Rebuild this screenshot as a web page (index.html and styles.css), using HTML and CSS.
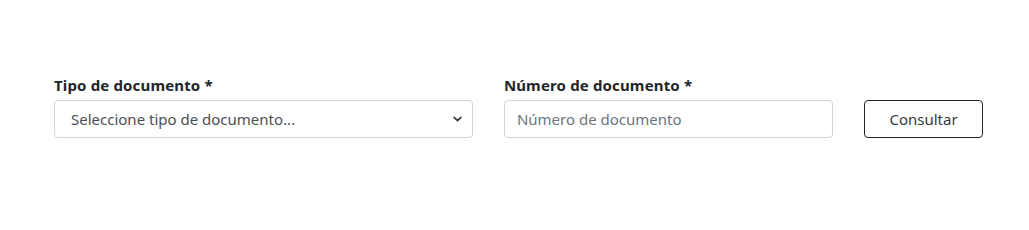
FILE: index.html
```html
<!DOCTYPE html>
<html lang="es">
<head>
  <meta charset="UTF-8">
  <meta name="viewport" content="width=device-width, initial-scale=1.0">
  <title>Consulta de documento</title>
  <link rel="stylesheet" href="styles.css">
</head>
<body>
  <div class="container">
    <form class="search-form">
      <div class="form-group type-group">
        <label for="tipo">Tipo de documento *</label>
        <select id="tipo" name="tipo">
          <option value="">Seleccione tipo de documento...</option>
          <option value="CC">Cédula de ciudadanía</option>
          <option value="CE">Cédula de extranjería</option>
          <option value="PA">Pasaporte</option>
        </select>
      </div>
      <div class="form-group number-group">
        <label for="numero">Número de documento *</label>
        <input type="text" id="numero" name="numero" placeholder="Número de documento">
      </div>
      <div class="form-action">
        <button type="submit">Consultar</button>
      </div>
    </form>
  </div>
</body>
</html>
```

FILE: styles.css
```css
body {
  font-family: "Noto Sans", "Open Sans", sans-serif;
  background-color: #fff;
  color: #212529;
  margin: 0;
  padding: 0;
}

.container {
  padding: 74px 46px 0 54px;
}

.search-form {
  display: flex;
  align-items: flex-end;
  gap: 31px;
}

.form-group label {
  display: block;
  margin-bottom: 3px;
  font-weight: bold;
  font-size: 15px;
  line-height: 23px;
  letter-spacing: 0.15px;
}

.type-group {
  width: 420px;
}

.number-group {
  width: 330px;
}

.form-group input,
.form-group select {
  display: block;
  width: 100%;
  height: 38px;
  box-sizing: border-box;
  border: 1px solid #ced4da;
  border-radius: 4px;
  background-color: #fff;
  font-family: inherit;
  font-size: 15px;
  color: #495057;
}

.form-group input {
  padding: 0 12px;
}

.form-group input::placeholder {
  color: #6c757d;
}

.form-group select {
  appearance: none;
  padding: 0 30px 0 16px;
  background-image: url("data:image/svg+xml,%3csvg xmlns='http://www.w3.org/2000/svg' viewBox='0 0 16 10'%3e%3cpath fill='none' stroke='%23343a40' stroke-linecap='round' stroke-linejoin='round' stroke-width='3' d='M2 2l6 6 6-6'/%3e%3c/svg%3e");
  background-repeat: no-repeat;
  background-position: right 10px center;
  background-size: 9px 6px;
}

.form-action button {
  width: 119px;
  height: 38px;
  padding: 0;
  background-color: #fff;
  color: #343a40;
  border: 1px solid #212529;
  border-radius: 4px;
  font-family: inherit;
  font-size: 15px;
  cursor: pointer;
}

.form-action button:hover {
  background-color: #212529;
  color: #fff;
}
```
